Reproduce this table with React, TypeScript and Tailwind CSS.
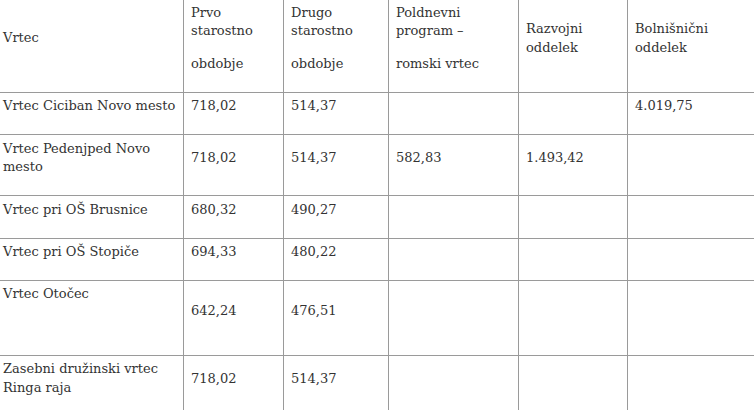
const header = [
  { paras: [["Vrtec"]] },
  { paras: [["Prvo", "starostno"], ["obdobje"]] },
  { paras: [["Drugo", "starostno"], ["obdobje"]] },
  { paras: [["Poldnevni", "program –"], ["romski vrtec"]] },
  { paras: [["Razvojni", "oddelek"]] },
  { paras: [["Bolnišnični", "oddelek"]] },
];

type Row = { name: string[]; extra?: boolean; values: string[] };

const rows: Row[] = [
  { name: ["Vrtec Ciciban Novo mesto"], values: ["718,02", "514,37", "", "", "4.019,75"] },
  { name: ["Vrtec Pedenjped Novo", "mesto"], values: ["718,02", "514,37", "582,83", "1.493,42", ""] },
  { name: ["Vrtec pri OŠ Brusnice"], values: ["680,32", "490,27", "", "", ""] },
  { name: ["Vrtec pri OŠ Stopiče"], values: ["694,33", "480,22", "", "", ""] },
  { name: ["Vrtec Otočec"], extra: true, values: ["642,24", "476,51", "", "", ""] },
  { name: ["Zasebni družinski vrtec", "Ringa raja"], values: ["718,02", "514,37", "", "", ""] },
];

const cell =
  "border border-[#9a9a9a] px-[7px] py-[4.3px] align-middle text-left font-normal";

function Para({ lines }: { lines: string[] }) {
  return (
    <p className="mb-[14px] whitespace-nowrap">
      {lines.map((l, i) => (
        <span key={i}>
          {i > 0 && <br />}
          {l}
        </span>
      ))}
    </p>
  );
}

export default function App() {
  return (
    <div className="h-[410px] w-[754px] overflow-hidden bg-white">
      <table
        className="-ml-[5px] -mt-[1.7px] w-[772px] table-fixed border-collapse text-[#333333] text-[13px] leading-[18.7px]"
        style={{ fontFamily: '"DejaVu Serif", "Liberation Serif", serif' }}
      >
        <colgroup>
          <col className="w-[188px]" />
          <col className="w-[100px]" />
          <col className="w-[105px]" />
          <col className="w-[130px]" />
          <col className="w-[109px]" />
          <col className="w-[140px]" />
        </colgroup>
        <thead>
          <tr>
            {header.map((h, i) => (
              <th key={i} className={cell}>
                {h.paras.map((p, j) => (
                  <Para key={j} lines={p} />
                ))}
              </th>
            ))}
          </tr>
        </thead>
        <tbody>
          {rows.map((r, i) => (
            <tr key={i}>
              <td className={`${cell} ${r.extra ? "align-top" : ""}`}>
                <Para lines={r.name} />
                {r.extra && <p className="mb-[14px]">&nbsp;</p>}
              </td>
              {r.values.map((v, j) => (
                <td key={j} className={cell}>
                  <Para lines={[v || "\u00a0"]} />
                </td>
              ))}
            </tr>
          ))}
        </tbody>
      </table>
    </div>
  );
}
